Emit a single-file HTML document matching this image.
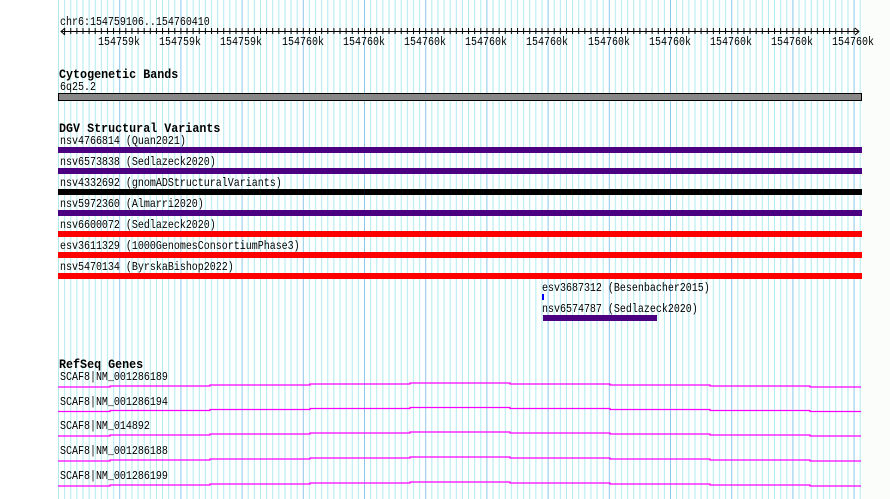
<!DOCTYPE html>
<html><head><meta charset="utf-8"><style>
html,body{margin:0;padding:0;background:#fbfdfb;}
svg{display:block;}
text{font-family:"Liberation Mono","DejaVu Sans Mono",monospace;font-size:12px;fill:#000;transform-box:fill-box;transform-origin:left bottom;transform:scaleX(0.833);}
.m text{transform-origin:center bottom;}
text.b{font-weight:bold;font-size:13px;transform:scaleX(0.9);}
</style></head><body>
<svg width="890" height="499" viewBox="0 0 890 499" xmlns="http://www.w3.org/2000/svg">
<defs>
<pattern id="g" patternUnits="userSpaceOnUse" x="58" y="0" width="61.2" height="499">
<rect x="0" y="0" width="1" height="499" fill="#8cc8ea"/>
<rect x="6.12" y="0" width="1" height="499" fill="#aeeaee"/>
<rect x="12.24" y="0" width="1" height="499" fill="#aeeaee"/>
<rect x="18.36" y="0" width="1" height="499" fill="#aeeaee"/>
<rect x="24.48" y="0" width="1" height="499" fill="#aeeaee"/>
<rect x="30.6" y="0" width="1" height="499" fill="#aeeaee"/>
<rect x="36.72" y="0" width="1" height="499" fill="#aeeaee"/>
<rect x="42.84" y="0" width="1" height="499" fill="#aeeaee"/>
<rect x="48.96" y="0" width="1" height="499" fill="#aeeaee"/>
<rect x="55.08" y="0" width="1" height="499" fill="#aeeaee"/>
</pattern>
<pattern id="t" patternUnits="userSpaceOnUse" x="58" y="0" width="6.12" height="40">
<rect x="0" y="28" width="1" height="6" fill="#000"/>
</pattern>
</defs>
<rect x="0" y="0" width="890" height="499" fill="#fff"/>
<rect x="862" y="0" width="28" height="499" fill="#fbfdfb"/>
<rect x="58" y="0" width="804" height="499" fill="url(#g)"/>
<rect x="58" y="0" width="1" height="499" fill="#aeeaee"/>

<text x="60" y="25">chr6:154759106..154760410</text>
<rect x="62" y="31" width="796" height="1" fill="#000"/>
<rect x="62" y="28" width="796" height="6" fill="url(#t)"/>
<path d="M65 28 L61 31.5 L65 35 M855 28 L859 31.5 L855 35" stroke="#000" fill="none"/>
<g text-anchor="middle" class="m">
<text x="119" y="45">154759k</text><text x="180" y="45">154759k</text><text x="241" y="45">154759k</text>
<text x="303" y="45">154760k</text><text x="364" y="45">154760k</text><text x="425" y="45">154760k</text>
<text x="486" y="45">154760k</text><text x="547" y="45">154760k</text><text x="609" y="45">154760k</text>
<text x="670" y="45">154760k</text><text x="731" y="45">154760k</text><text x="792" y="45">154760k</text>
<text x="853" y="45">154760k</text>
</g>

<text class="b" x="59" y="78">Cytogenetic Bands</text>
<text x="60" y="90">6q25.2</text>
<rect x="58.5" y="93.5" width="803" height="7" fill="#888" stroke="#000"/>

<text class="b" x="59" y="132">DGV Structural Variants</text>
<text x="60" y="144">nsv4766814 (Quan2021)</text>
<rect x="58" y="147" width="804" height="6" fill="#4b0082"/>
<text x="60" y="165">nsv6573838 (Sedlazeck2020)</text>
<rect x="58" y="168" width="804" height="6" fill="#4b0082"/>
<text x="60" y="186">nsv4332692 (gnomADStructuralVariants)</text>
<rect x="58" y="189" width="804" height="6" fill="#000"/>
<text x="60" y="207">nsv5972360 (Almarri2020)</text>
<rect x="58" y="210" width="804" height="6" fill="#4b0082"/>
<text x="60" y="228">nsv6600072 (Sedlazeck2020)</text>
<rect x="58" y="231" width="804" height="6" fill="#ff0000"/>
<text x="60" y="249">esv3611329 (1000GenomesConsortiumPhase3)</text>
<rect x="58" y="252" width="804" height="6" fill="#ff0000"/>
<text x="60" y="270">nsv5470134 (ByrskaBishop2022)</text>
<rect x="58" y="273" width="804" height="6" fill="#ff0000"/>
<text x="542" y="291">esv3687312 (Besenbacher2015)</text>
<rect x="542" y="294" width="2" height="6" fill="#0000ff"/>
<text x="542" y="312">nsv6574787 (Sedlazeck2020)</text>
<rect x="543" y="315" width="114" height="6" fill="#4b0082"/>

<text class="b" x="59" y="368">RefSeq Genes</text>
<g fill="none" stroke="#ff00ff" stroke-width="1.3">
<path id="gl" d="M58 387 H110 V386 H210 V385 H310 V384 H410 V383 H510 V384 H610 V385 H710 V386 H810 V387 H861"/>
<use href="#gl" y="24.5"/>
<use href="#gl" y="49"/>
<use href="#gl" y="74"/>
<use href="#gl" y="99"/>
</g>
<text x="60" y="380">SCAF8|NM_001286189</text>
<text x="60" y="405">SCAF8|NM_001286194</text>
<text x="60" y="429">SCAF8|NM_014892</text>
<text x="60" y="454">SCAF8|NM_001286188</text>
<text x="60" y="479">SCAF8|NM_001286199</text>
</svg>
</body></html>
